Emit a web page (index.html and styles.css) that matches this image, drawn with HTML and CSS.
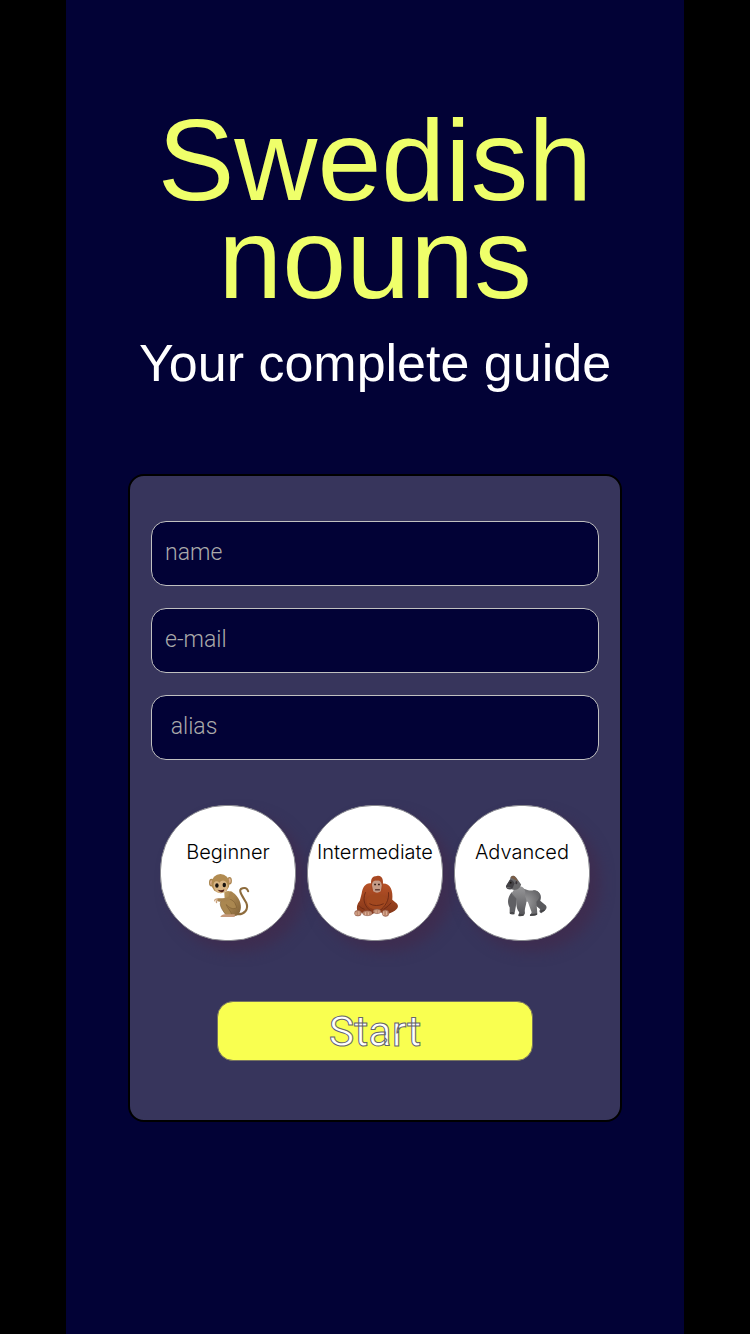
FILE: index.html
```html
<!DOCTYPE html>
<html lang="en">
<head>
<meta charset="utf-8">
<meta name="viewport" content="width=device-width, initial-scale=1">
<title>Swedish nouns</title>
<link rel="stylesheet" href="styles.css">
</head>
<body>
<main class="page">
  <header class="intro">
    <h1 class="title">Swedish nouns</h1>
    <p class="subtitle">Your complete guide</p>
  </header>
  <form class="card">
    <div class="fields">
      <input class="field" type="text" name="name" aria-label="name" placeholder="name">
      <input class="field" type="email" name="email" aria-label="e-mail" placeholder="e-mail">
      <input class="field" type="text" name="alias" aria-label="alias" placeholder=" alias">
    </div>
    <div class="levels">
      <button class="level" type="button">
        <span>Beginner</span>
        <svg class="animal" viewBox="0 0 44 44" aria-hidden="true">
          <defs>
            <linearGradient id="fur" x1="0" y1="0" x2="1" y2="1"><stop offset="0" stop-color="#c09b60"/><stop offset="1" stop-color="#806035"/></linearGradient>
          </defs>
          <path d="M29 41C37 42 42 36 39 29C34 21 30 15 35 14C38 13 40 14 41 17" fill="none" stroke="#8d6b3c" stroke-width="2.2" stroke-linecap="round"/>
          <path d="M16 18C21 15 26 18 29 22C34 28 35 36 31 41C27 45 18 43 17 36Z" fill="url(#fur)"/>
          <path d="M27 29C23 24 17 24 13 27C10 30 13 36 18 42H24C23 38 19 34 18 31C21 34 25 37 29 34Z" fill="#aa8750" stroke="#795a30" stroke-width=".6"/>
          <path d="M23 19C24 24 20 27 10 26" fill="none" stroke="#a88450" stroke-width="3.5" stroke-linecap="round"/>
          <path d="M9 25Q6 25 6 27M9 26Q7 28 8 29" fill="none" stroke="#c9a17b" stroke-width="1.3" stroke-linecap="round"/>
          <path d="M16 41H27V44H12Q12 42 16 41Z" fill="#c69a7b"/>
          <ellipse cx="2.5" cy="8" rx="2.5" ry="4" fill="#a9854e"/><ellipse cx="2.5" cy="8" rx="1.2" ry="2.6" fill="#e4b69a"/>
          <ellipse cx="21.5" cy="6" rx="2.5" ry="4" fill="#a9854e"/><ellipse cx="21.5" cy="6" rx="1.3" ry="2.6" fill="#e4b69a"/>
          <ellipse cx="12" cy="9" rx="9.5" ry="10" fill="#b18b51"/>
          <path d="M11 8C8 5 4 7 5 12C6 17 9 19 13 19C17 19 21 15 19 9C17 5 13 5 11 8Z" fill="#d8b585"/>
          <ellipse cx="8.3" cy="11" rx="1.8" ry="2.4" fill="#15110e"/><ellipse cx="16" cy="10.5" rx="1.8" ry="2.4" fill="#15110e"/>
          <path d="M9 15.5Q13 16.5 16 15Q16 18 13 18Q11 18 9 15.5Z" fill="#56251d"/>
        </svg>
      </button>
      <button class="level" type="button">
        <span>Intermediate</span>
        <svg class="animal" viewBox="0 0 44 44" aria-hidden="true">
          <defs>
            <linearGradient id="coat" x1="0" y1="0" x2="0" y2="1"><stop offset="0" stop-color="#b85227"/><stop offset="1" stop-color="#843719"/></linearGradient>
          </defs>
          <path d="M17 9C11 7 7 12 6 19L4 27C1 30 0 35 2 39L17 41L22 38L32 41C42 38 46 34 43 30L38 26C39 16 36 8 27 9Z" fill="url(#coat)"/>
          <ellipse cx="22" cy="28" rx="11" ry="8" fill="#a2481f"/>
          <path d="M10 18C6 27 10 34 16 38M34 18C35 26 31 33 24 38M14 30Q21 34 29 30M3 32Q5 35 9 36M37 29Q34 33 29 36" fill="none" stroke="#6e2a14" stroke-width="1"/>
          <path d="M16 11C15 4 17 1 22 1C28 0 29 6 28 12C28 18 26 20 22 20C18 20 16 17 16 11Z" fill="#a84822"/>
          <path d="M22 6C18 5 16 9 17 12L18 17Q22 20 26 17L27 11C27 7 24 5 22 6Z" fill="#c59b87"/>
          <path d="M19 10H21M23 10H25" stroke="#3a211a" stroke-width="1.7"/>
          <path d="M20 15.5H25" stroke="#563029" stroke-width="1.4"/>
          <g fill="#bc876d" stroke="#855043" stroke-width=".5"><ellipse cx="2" cy="40" rx="3.5" ry="3"/><ellipse cx="12" cy="40" rx="5" ry="2.6"/><ellipse cx="22" cy="38" rx="4" ry="2.5"/><ellipse cx="31" cy="40" rx="3.5" ry="3.4"/></g>
          <path d="M0 39V42M3 38V42M10 39V42M13 39V42M21 37V40M24 37V40M29 38V42M32 38V42" stroke="#edc5ad" stroke-width=".7"/>
        </svg>
      </button>
      <button class="level" type="button">
        <span>Advanced</span>
        <svg class="animal" viewBox="-4 0 44 44" aria-hidden="true">
          <defs>
            <radialGradient id="back"><stop offset="0" stop-color="#9b9b9d"/><stop offset="1" stop-color="#69696c"/></radialGradient>
            <linearGradient id="arm" x1="0" y1="0" x2="0" y2="1"><stop offset="0" stop-color="#99999b"/><stop offset="1" stop-color="#515155"/></linearGradient>
          </defs>
          <path d="M5 18C1 23 0 29 3 34L3 39Q2 42 8 41L11 24Z" fill="#606064"/>
          <path d="M28 16C35 17 37 22 35 27L41 32Q43 35 39 38L36 40Q33 39 35 36L28 30Z" fill="#59595d"/>
          <path d="M12 13C19 14 22 17 28 16C36 16 36 24 31 28L32 41Q31 43 24 43L26 39L22 28L15 28L5 21Z" fill="url(#back)"/>
          <path d="M9 13C16 9 21 15 19 22C23 29 18 33 19 40Q18 44 12 43L13 39C9 34 10 27 10 24L5 19Z" fill="url(#arm)"/>
          <path d="M4 40Q6 39 7 40M13 42H17M25 42L31 41M36 38L39 37" fill="none" stroke="#414144" stroke-width="1.6" stroke-linecap="round"/>
          <path d="M4 2Q7-1 10 3L15 10C14 14 10 17 5 15C0 16-2 13 0 10L3 6Z" fill="#68686a"/>
          <path d="M4 3Q6-1 9 2L12 7L9 5Z" fill="#7b5d46"/>
          <path d="M3 5Q7 5 8 9L6 14Q1 16-1 12Z" fill="#424145"/>
          <circle cx="4" cy="8" r="1" fill="#17130f"/><path d="M0 13L4 13.5" stroke="#777" stroke-width=".8"/>
          <ellipse cx="10" cy="8" rx="1" ry="1.7" fill="#393338"/>
        </svg>
      </button>
    </div>
    <button class="start" type="submit">Start</button>
  </form>
</main>
</body>
</html>
```

FILE: styles.css
```css
* {
  box-sizing: border-box;
}

body {
  margin: 0;
  background: #000;
  font-family: "Liberation Sans", Arial, sans-serif;
}

.page {
  width: 82.3%;
  min-height: 100vh;
  margin: 0 auto;
  padding: 111px 0 64px;
  background: #020236;
}

.intro {
  padding: 0 48px;
  text-align: center;
}

.title {
  margin: 0;
  color: #efff6a;
  font-size: 115px;
  font-weight: 400;
  line-height: 98px;
}

.subtitle {
  margin: 24px 0 0;
  color: #fff;
  font-size: 52px;
  font-weight: 400;
  line-height: 64px;
  white-space: nowrap;
}

.card {
  width: 80%;
  margin: 79px auto 0;
  padding: 45px 21px 59px;
  border: 2px solid #000;
  border-radius: 16px;
  background: #37355c;
}

.fields {
  display: grid;
  gap: 22px;
}

.field {
  width: 100%;
  height: 65px;
  padding: 0 13px 2px;
  border: 1px solid #c0c0c0;
  border-radius: 15px;
  background: #020236;
  color: #fff;
  font: 300 23px Roboto, sans-serif;
}

.field::placeholder {
  color: #aaa;
  opacity: 1;
}

.levels {
  display: flex;
  justify-content: center;
  gap: 11px;
  margin-top: 45px;
}

.level {
  display: flex;
  flex-direction: column;
  align-items: center;
  gap: 11px;
  width: 136px;
  height: 136px;
  padding: 34px 0 0;
  border: 1px solid #88888f;
  border-radius: 65px;
  background: #fff;
  box-shadow: 10px 10px 14px #3e2d50;
  color: #000;
  font: 300 20px/24px Inter, sans-serif;
}

.animal {
  width: 42px;
  height: 42px;
  margin-left: 4px;
  overflow: visible;
}

.start {
  display: block;
  width: 316px;
  max-width: 100%;
  height: 60px;
  margin: 60px auto 0;
  padding: 0;
  border: 1px solid #77745f;
  border-radius: 16px;
  background: #f9ff50;
  color: #fff;
  font: 400 43px/56px Roboto, "Liberation Sans", sans-serif;
  -webkit-text-stroke: 1px #66666c;
}
```
